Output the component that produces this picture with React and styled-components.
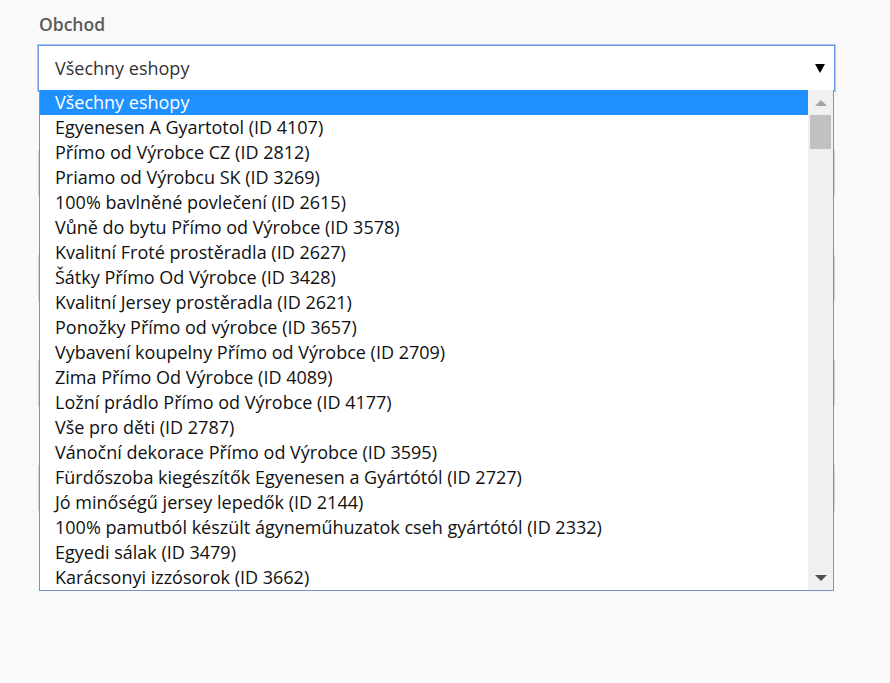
import React from 'react'
import styled, { createGlobalStyle } from 'styled-components'

const GlobalStyle = createGlobalStyle`
  html, body {
    margin: 0;
    padding: 0;
    background: #f9f9f9;
  }
  body {
    font-family: 'Open Sans', 'Liberation Sans', sans-serif;
  }
`

const shops = [
  'Všechny eshopy',
  'Egyenesen A Gyartotol (ID 4107)',
  'Přímo od Výrobce CZ (ID 2812)',
  'Priamo od Výrobcu SK (ID 3269)',
  '100% bavlněné povlečení (ID 2615)',
  'Vůně do bytu Přímo od Výrobce (ID 3578)',
  'Kvalitní Froté prostěradla (ID 2627)',
  'Šátky Přímo Od Výrobce (ID 3428)',
  'Kvalitní Jersey prostěradla (ID 2621)',
  'Ponožky Přímo od výrobce (ID 3657)',
  'Vybavení koupelny Přímo od Výrobce (ID 2709)',
  'Zima Přímo Od Výrobce (ID 4089)',
  'Ložní prádlo Přímo od Výrobce (ID 4177)',
  'Vše pro děti (ID 2787)',
  'Vánoční dekorace Přímo od Výrobce (ID 3595)',
  'Fürdőszoba kiegészítők Egyenesen a Gyártótól (ID 2727)',
  'Jó minőségű jersey lepedők (ID 2144)',
  '100% pamutból készült ágyneműhuzatok cseh gyártótól (ID 2332)',
  'Egyedi sálak (ID 3479)',
  'Karácsonyi izzósorok (ID 3662)'
]

const Page = styled.div`
  box-sizing: border-box;
  min-height: 683px;
  padding: 12px 55px 0 38px;
`

const Form = styled.form`
  display: grid;
  width: 797px;
`

const Group = styled.div`
  position: relative;
  display: grid;
  grid-template-rows: 33px 46px;
  margin-bottom: 26px;
`

const Label = styled.label`
  color: #595959;
  font-size: 17.5px;
  font-weight: 600;
  line-height: 24px;
  padding-left: 1px;
`

const SelectBox = styled.div`
  box-sizing: border-box;
  height: 46px;
  display: flex;
  align-items: center;
  justify-content: space-between;
  padding: 0 9px 0 16px;
  background: #fff;
  border: 1px solid ${(p) => (p.$focused ? '#6f9ae8' : '#d4d4d4')};
  box-shadow: ${(p) => (p.$focused ? '0 0 0 1px #a9c4f3' : 'none')};
  color: #333;
  font-size: 18px;
`

const Caret = styled.span`
  width: 0;
  height: 0;
  margin-top: 1px;
  border-left: 5px solid transparent;
  border-right: 5px solid transparent;
  border-top: 9px solid #000;
`

const Listbox = styled.div`
  position: absolute;
  top: 78px;
  left: 1px;
  width: 795px;
  height: 501px;
  box-sizing: border-box;
  display: flex;
  background: #fff;
  border: 1px solid #7592cd;
  border-top: none;
  z-index: 10;
`

const Options = styled.ul`
  flex: 1;
  list-style: none;
  margin: 0;
  padding: 0;
  overflow: hidden;
`

const Option = styled.li`
  height: 25px;
  line-height: 25px;
  padding-left: 15px;
  font-size: 18px;
  white-space: nowrap;
  color: ${(p) => (p.$active ? '#fff' : '#111')};
  background: ${(p) => (p.$active ? '#1e90ff' : 'transparent')};
`

const Scrollbar = styled.div`
  width: 25px;
  display: flex;
  flex-direction: column;
  align-items: center;
  background: #f0f0f0;
`

const ArrowButton = styled.div`
  height: 25px;
  width: 100%;
  display: flex;
  align-items: center;
  justify-content: center;
`

const Arrow = styled.span`
  width: 0;
  height: 0;
  border-left: 6px solid transparent;
  border-right: 6px solid transparent;
  ${(p) =>
    p.$down
      ? 'border-top: 6px solid #505050;'
      : 'border-bottom: 6px solid #a3a3a3;'}
`

const Thumb = styled.div`
  width: 21px;
  height: 34px;
  background: #c1c1c1;
`

const Track = styled.div`
  flex: 1;
`

export default function App() {
  return (
    <Page>
      <GlobalStyle />
      <Form>
        <Group>
          <Label>Obchod</Label>
          <SelectBox $focused>
            <span>Všechny eshopy</span>
            <Caret />
          </SelectBox>
          <Listbox>
            <Options>
              {shops.map((s, i) => (
                <Option key={s} $active={i === 0}>
                  {s}
                </Option>
              ))}
            </Options>
            <Scrollbar>
              <ArrowButton>
                <Arrow />
              </ArrowButton>
              <Thumb />
              <Track />
              <ArrowButton>
                <Arrow $down />
              </ArrowButton>
            </Scrollbar>
          </Listbox>
        </Group>
        {[1, 2, 3, 4].map((n) => (
          <Group key={n}>
            <Label>&nbsp;</Label>
            <SelectBox />
          </Group>
        ))}
      </Form>
    </Page>
  )
}
